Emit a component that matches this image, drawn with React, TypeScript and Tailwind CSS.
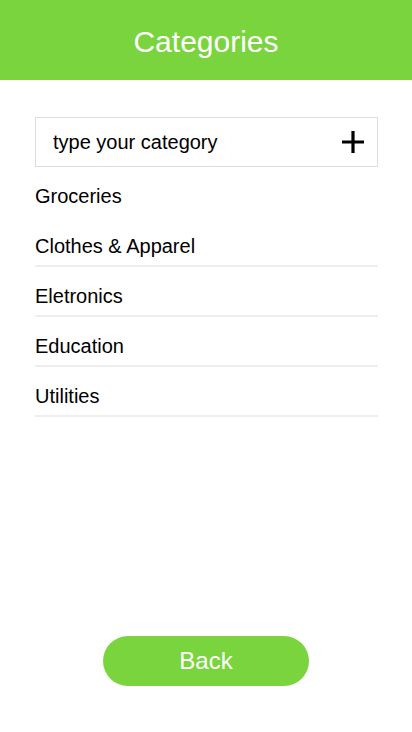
import { useState } from 'react';

const categories = ['Groceries', 'Clothes & Apparel', 'Eletronics', 'Education', 'Utilities'];

export default function App() {
    const [value, setValue] = useState('');

    return (
        <div className="w-[412px] h-[732px] bg-white flex flex-col font-['Liberation_Sans',Arial,sans-serif] text-black">
            <header className="h-20 bg-[#7ad43e] flex items-center justify-center pt-1">
                <h1 className="text-white text-[30px] leading-none">Categories</h1>
            </header>

            <div className="px-[35px] pt-[37px] w-[413px]">
                {/* Campo de nova categoria */}
                <div className="h-[50px] border border-[#dddddd] flex items-center pl-[17px] pr-[12px]">
                    <input
                        value={value}
                        onChange={(e) => setValue(e.target.value)}
                        placeholder="type your category"
                        className="flex-1 text-[20px] outline-none placeholder:text-black bg-transparent"
                    />
                    <svg width="24" height="24" viewBox="0 0 24 24" className="shrink-0">
                        <path d="M12 1v22M1 12h22" stroke="#000" strokeWidth="3.2" />
                    </svg>
                </div>

                <ul>
                    {categories.map((cat, i) => (
                        <li
                            key={cat}
                            className={`h-[50px] flex items-center pt-[9px] text-[20px] border-b-2 ${i === 0 ? 'border-transparent' : 'border-[#eeeeee]'}`}
                        >
                            {cat}
                        </li>
                    ))}
                </ul>
            </div>

            <div className="flex-1" />

            <div className="flex justify-center pb-[46px]">
                <button className="w-[206px] h-[50px] rounded-full bg-[#7ad43e] text-white text-[24px]">
                    Back
                </button>
            </div>
        </div>
    );
}
